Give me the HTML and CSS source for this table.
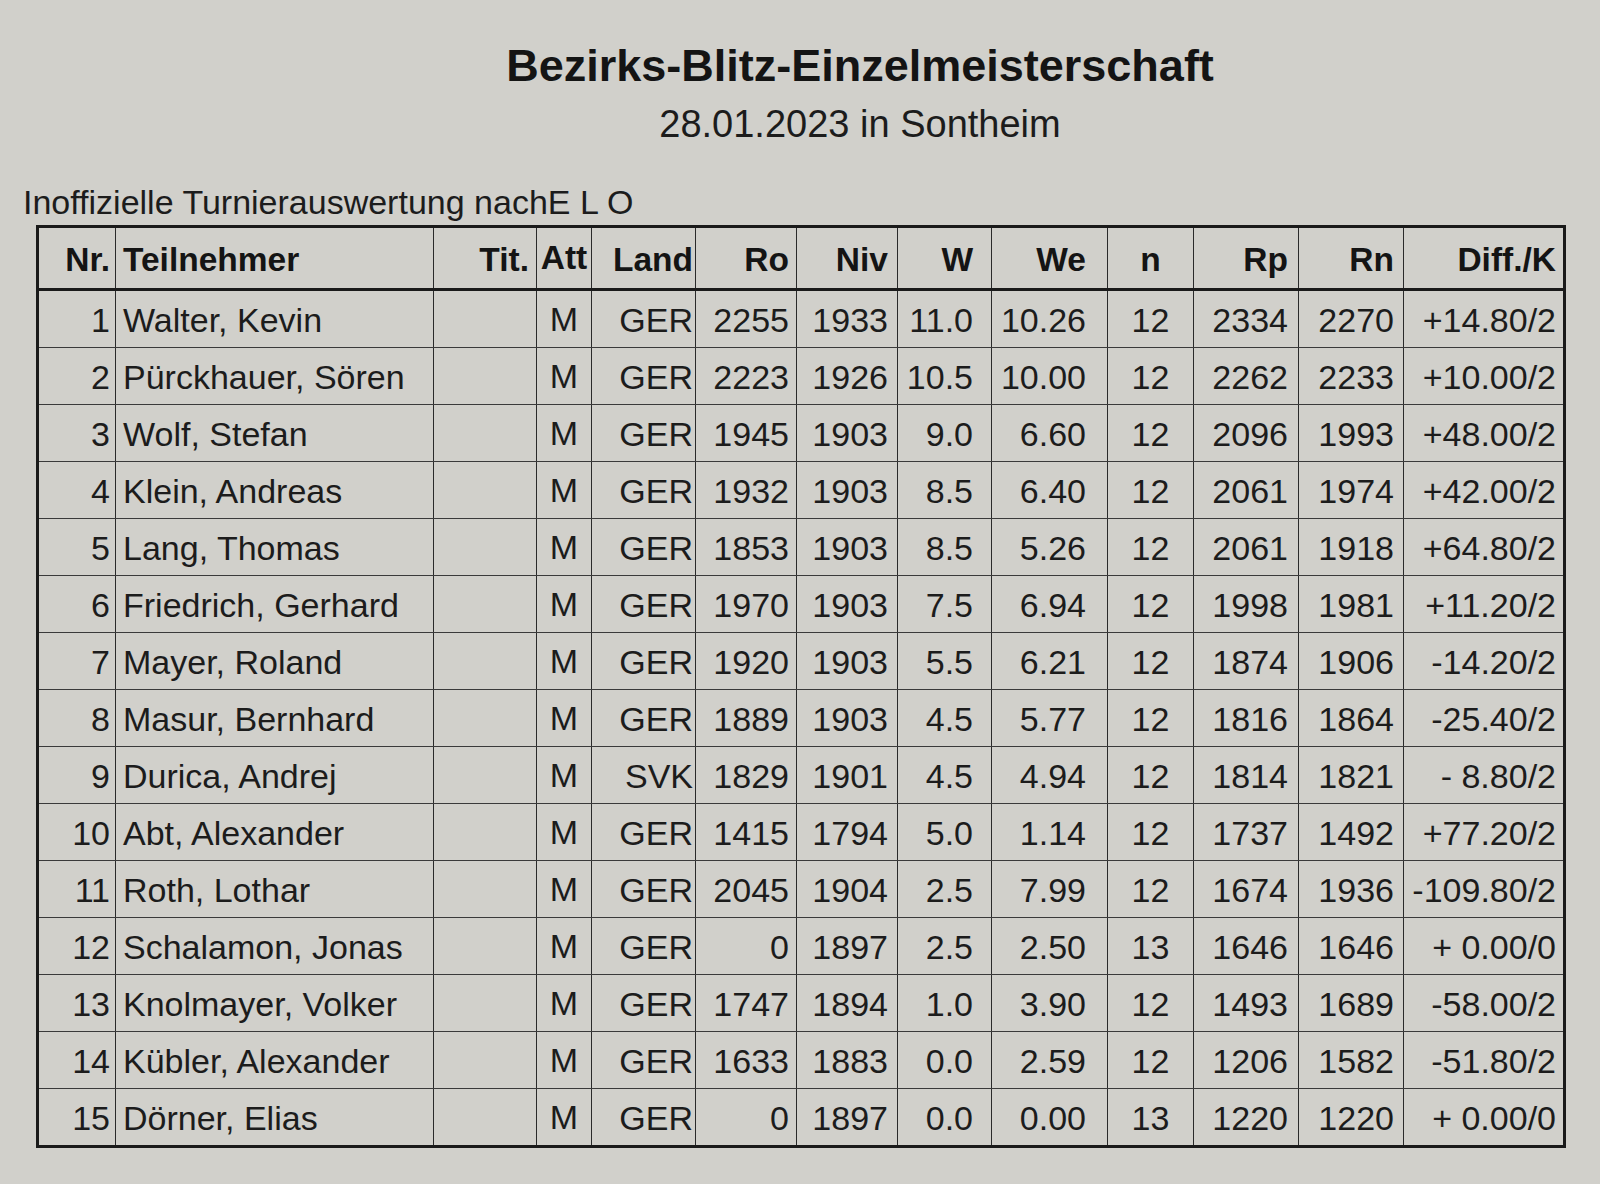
FILE: index.html
```html
<!DOCTYPE html>
<html lang="de">
<head>
<meta charset="utf-8">
<title>Bezirks-Blitz-Einzelmeisterschaft</title>
<link rel="stylesheet" href="styles.css">
</head>
<body>
<div class="page">
  <header class="head">
    <h1 class="title">Bezirks-Blitz-Einzelmeisterschaft</h1>
    <p class="subtitle">28.01.2023 in Sontheim</p>
  </header>
  <p class="label">Inoffizielle Turnierauswertung nachE L O</p>
  <table class="results">
    <colgroup>
      <col class="c-nr"><col class="c-name"><col class="c-tit"><col class="c-att"><col class="c-land">
      <col class="c-ro"><col class="c-niv"><col class="c-w"><col class="c-we"><col class="c-n">
      <col class="c-rp"><col class="c-rn"><col class="c-diff">
    </colgroup>
    <thead>
      <tr>
        <th class="r nr">Nr.</th><th class="l name">Teilnehmer</th><th class="r">Tit.</th><th class="c att">Att</th><th class="r land">Land</th>
        <th class="r">Ro</th><th class="r niv">Niv</th><th class="r w">W</th><th class="r we">We</th><th class="c">n</th>
        <th class="r rp">Rp</th><th class="r rn">Rn</th><th class="r">Diff./K</th>
      </tr>
    </thead>
    <tbody>
      <tr><td class="r nr">1</td><td class="l name">Walter, Kevin</td><td></td><td class="c att">M</td><td class="r land">GER</td><td class="r">2255</td><td class="r niv">1933</td><td class="r w">11.0</td><td class="r we">10.26</td><td class="c">12</td><td class="r rp">2334</td><td class="r rn">2270</td><td class="r">+14.80/2</td></tr>
      <tr><td class="r nr">2</td><td class="l name">Pürckhauer, Sören</td><td></td><td class="c att">M</td><td class="r land">GER</td><td class="r">2223</td><td class="r niv">1926</td><td class="r w">10.5</td><td class="r we">10.00</td><td class="c">12</td><td class="r rp">2262</td><td class="r rn">2233</td><td class="r">+10.00/2</td></tr>
      <tr><td class="r nr">3</td><td class="l name">Wolf, Stefan</td><td></td><td class="c att">M</td><td class="r land">GER</td><td class="r">1945</td><td class="r niv">1903</td><td class="r w">9.0</td><td class="r we">6.60</td><td class="c">12</td><td class="r rp">2096</td><td class="r rn">1993</td><td class="r">+48.00/2</td></tr>
      <tr><td class="r nr">4</td><td class="l name">Klein, Andreas</td><td></td><td class="c att">M</td><td class="r land">GER</td><td class="r">1932</td><td class="r niv">1903</td><td class="r w">8.5</td><td class="r we">6.40</td><td class="c">12</td><td class="r rp">2061</td><td class="r rn">1974</td><td class="r">+42.00/2</td></tr>
      <tr><td class="r nr">5</td><td class="l name">Lang, Thomas</td><td></td><td class="c att">M</td><td class="r land">GER</td><td class="r">1853</td><td class="r niv">1903</td><td class="r w">8.5</td><td class="r we">5.26</td><td class="c">12</td><td class="r rp">2061</td><td class="r rn">1918</td><td class="r">+64.80/2</td></tr>
      <tr><td class="r nr">6</td><td class="l name">Friedrich, Gerhard</td><td></td><td class="c att">M</td><td class="r land">GER</td><td class="r">1970</td><td class="r niv">1903</td><td class="r w">7.5</td><td class="r we">6.94</td><td class="c">12</td><td class="r rp">1998</td><td class="r rn">1981</td><td class="r">+11.20/2</td></tr>
      <tr><td class="r nr">7</td><td class="l name">Mayer, Roland</td><td></td><td class="c att">M</td><td class="r land">GER</td><td class="r">1920</td><td class="r niv">1903</td><td class="r w">5.5</td><td class="r we">6.21</td><td class="c">12</td><td class="r rp">1874</td><td class="r rn">1906</td><td class="r">-14.20/2</td></tr>
      <tr><td class="r nr">8</td><td class="l name">Masur, Bernhard</td><td></td><td class="c att">M</td><td class="r land">GER</td><td class="r">1889</td><td class="r niv">1903</td><td class="r w">4.5</td><td class="r we">5.77</td><td class="c">12</td><td class="r rp">1816</td><td class="r rn">1864</td><td class="r">-25.40/2</td></tr>
      <tr><td class="r nr">9</td><td class="l name">Durica, Andrej</td><td></td><td class="c att">M</td><td class="r land">SVK</td><td class="r">1829</td><td class="r niv">1901</td><td class="r w">4.5</td><td class="r we">4.94</td><td class="c">12</td><td class="r rp">1814</td><td class="r rn">1821</td><td class="r">- 8.80/2</td></tr>
      <tr><td class="r nr">10</td><td class="l name">Abt, Alexander</td><td></td><td class="c att">M</td><td class="r land">GER</td><td class="r">1415</td><td class="r niv">1794</td><td class="r w">5.0</td><td class="r we">1.14</td><td class="c">12</td><td class="r rp">1737</td><td class="r rn">1492</td><td class="r">+77.20/2</td></tr>
      <tr><td class="r nr">11</td><td class="l name">Roth, Lothar</td><td></td><td class="c att">M</td><td class="r land">GER</td><td class="r">2045</td><td class="r niv">1904</td><td class="r w">2.5</td><td class="r we">7.99</td><td class="c">12</td><td class="r rp">1674</td><td class="r rn">1936</td><td class="r">-109.80/2</td></tr>
      <tr><td class="r nr">12</td><td class="l name">Schalamon, Jonas</td><td></td><td class="c att">M</td><td class="r land">GER</td><td class="r">0</td><td class="r niv">1897</td><td class="r w">2.5</td><td class="r we">2.50</td><td class="c">13</td><td class="r rp">1646</td><td class="r rn">1646</td><td class="r">+ 0.00/0</td></tr>
      <tr><td class="r nr">13</td><td class="l name">Knolmayer, Volker</td><td></td><td class="c att">M</td><td class="r land">GER</td><td class="r">1747</td><td class="r niv">1894</td><td class="r w">1.0</td><td class="r we">3.90</td><td class="c">12</td><td class="r rp">1493</td><td class="r rn">1689</td><td class="r">-58.00/2</td></tr>
      <tr><td class="r nr">14</td><td class="l name">Kübler, Alexander</td><td></td><td class="c att">M</td><td class="r land">GER</td><td class="r">1633</td><td class="r niv">1883</td><td class="r w">0.0</td><td class="r we">2.59</td><td class="c">12</td><td class="r rp">1206</td><td class="r rn">1582</td><td class="r">-51.80/2</td></tr>
      <tr><td class="r nr">15</td><td class="l name">Dörner, Elias</td><td></td><td class="c att">M</td><td class="r land">GER</td><td class="r">0</td><td class="r niv">1897</td><td class="r w">0.0</td><td class="r we">0.00</td><td class="c">13</td><td class="r rp">1220</td><td class="r rn">1220</td><td class="r">+ 0.00/0</td></tr>
    </tbody>
  </table>
</div>
</body>
</html>
```

FILE: styles.css
```css
html, body {
  margin: 0;
  padding: 0;
}

body {
  background: #d1d0cb;
  color: #171717;
  font-family: "Liberation Sans", Arial, sans-serif;
  width: 1600px;
  height: 1184px;
  overflow: hidden;
}

.page {
  padding: 0 0 0 36px;
}

.head {
  margin-left: -36px;
  padding: 40px 0 0 120px;
  width: 1600px;
  box-sizing: border-box;
  text-align: center;
}

.title {
  margin: 0;
  font-size: 45px;
  line-height: 52px;
  font-weight: bold;
  color: #141414;
}

.subtitle {
  margin: 10px 0 0 0;
  font-size: 38px;
  line-height: 44px;
  color: #1c1c1c;
}

.label {
  margin: 37px 0 0 -13px;
  font-size: 34px;
  line-height: 38px;
  color: #1c1c1c;
}

.results {
  margin-top: 4px;
  border-collapse: collapse;
  table-layout: fixed;
  width: 1527px;
  border: 3px solid #1a1a1a;
  font-size: 34px;
}

.c-nr { width: 78px; }
.c-name { width: 318px; }
.c-tit { width: 103px; }
.c-att { width: 55px; }
.c-land { width: 104px; }
.c-ro { width: 101px; }
.c-niv { width: 101px; }
.c-w { width: 94px; }
.c-we { width: 116px; }
.c-n { width: 86px; }
.c-rp { width: 105px; }
.c-rn { width: 105px; }
.c-diff { width: 161px; }

.results th,
.results td {
  border-left: 1.5px solid #2a2a2a;
  border-right: 1.5px solid #2a2a2a;
  padding: 0 7px;
  white-space: nowrap;
  overflow: visible;
}

.results th {
  height: 56px;
  font-size: 33.5px;
  font-weight: bold;
  border-bottom: 3px solid #1a1a1a;
  color: #141414;
  vertical-align: middle;
  padding-top: 4px;
}

.results td {
  height: 54px;
  border-bottom: 1.5px solid #3a3a3a;
  color: #1c1c1c;
  vertical-align: middle;
  padding-top: 2px;
}

.results .r { text-align: right; }
.results .l { text-align: left; }
.results .c { text-align: center; }

.results .nr { padding-right: 5px; }
.results .name { padding-left: 7px; }
.results .att { padding: 0; }
.results .land { padding-right: 2px; padding-left: 0; }
.results .niv { padding-right: 9px; }
.results .w { padding-right: 18px; }
.results .we { padding-right: 21px; }
.results .rp { padding-right: 10px; }
.results .rn { padding-right: 9px; }
```
